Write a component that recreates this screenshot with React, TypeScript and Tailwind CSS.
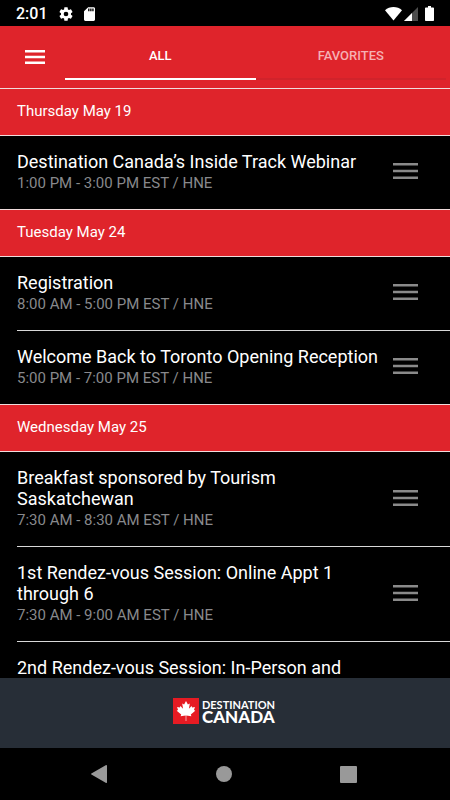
import React, { useState } from 'react';

type Session = { title: string; time: string };
type Day = { name: string; sessions: Session[] };

const days: Day[] = [
  {
    name: 'Thursday May 19',
    sessions: [
      { title: 'Destination Canada’s Inside Track Webinar', time: '1:00 PM - 3:00 PM EST / HNE' },
    ],
  },
  {
    name: 'Tuesday May 24',
    sessions: [
      { title: 'Registration', time: '8:00 AM - 5:00 PM EST / HNE' },
      { title: 'Welcome Back to Toronto Opening Reception', time: '5:00 PM - 7:00 PM EST / HNE' },
    ],
  },
  {
    name: 'Wednesday May 25',
    sessions: [
      { title: 'Breakfast sponsored by Tourism Saskatchewan', time: '7:30 AM - 8:30 AM EST / HNE' },
      { title: '1st Rendez-vous Session: Online Appt 1 through 6', time: '7:30 AM - 9:00 AM EST / HNE' },
      { title: '2nd Rendez-vous Session: In-Person and Online', time: '9:00 AM - 12:00 PM EST / HNE' },
    ],
  },
];

const StatusBar: React.FC = () => (
  <div className="flex h-[26px] shrink-0 items-center bg-black pl-4 pr-4 pt-px text-white">
    <span className="text-base font-medium leading-5">2:01</span>
    <svg viewBox="0 0 24 24" className="ml-[10px] size-4" fill="currentColor">
      <path d="M19.43 12.98c.04-.32.07-.64.07-.98s-.03-.66-.07-.98l2.11-1.65c.19-.15.24-.42.12-.64l-2-3.46c-.12-.22-.39-.3-.61-.22l-2.49 1c-.52-.4-1.08-.73-1.69-.98l-.38-2.65A.49.49 0 0 0 14 2h-4c-.25 0-.46.18-.49.42l-.38 2.65c-.61.25-1.17.59-1.69.98l-2.49-1c-.23-.09-.49 0-.61.22l-2 3.46c-.13.22-.07.49.12.64l2.11 1.65c-.04.32-.07.65-.07.98s.03.66.07.98l-2.11 1.65c-.19.15-.24.42-.12.64l2 3.46c.12.22.39.3.61.22l2.49-1c.52.4 1.08.73 1.69.98l.38 2.65c.03.24.24.42.49.42h4c.25 0 .46-.18.49-.42l.38-2.65c.61-.25 1.17-.59 1.69-.98l2.49 1c.23.09.49 0 .61-.22l2-3.46c.12-.22.07-.49-.12-.64l-2.11-1.65zM12 15.5a3.5 3.5 0 1 1 0-7 3.5 3.5 0 0 1 0 7z" />
    </svg>
    <svg viewBox="4 2 16 20" className="ml-[10px] h-[14px] w-[11px]" fill="currentColor">
      <path d="M18 2h-8L4.02 8 4 20c0 1.100.9 2 2 2h12c1.100 0 2-.9 2-2V4c0-1.100-.9-2-2-2zm-6 6h-2V4h2v4zm3 0h-2V4h2v4zm3 0h-2V4h2v4z" />
    </svg>
    <svg viewBox="0 0 17 14" className="ml-auto h-[14px] w-[17px]" fill="currentColor">
      <path d="M8.500 13.500L0 3.200C2.400 1.200 5.300 0 8.500 0s6.100 1.200 8.500 3.200z" />
    </svg>
    <svg viewBox="0 0 14 14" className="ml-[2px] size-[14px]" fill="currentColor">
      <path d="M0 14L14 0v14z" fillOpacity="0.3" />
      <path d="M0 14L8 6v8z" />
    </svg>
    <svg viewBox="0 0 9 15" className="ml-[7px] h-[15px] w-[9px]" fill="currentColor">
      <path d="M3 0h3v1.500h2.200c.5 0 .8.300.8.800v11.900c0 .5-.3.800-.8.800H.8c-.5 0-.8-.3-.8-.8V2.300c0-.5.3-.8.800-.8H3z" />
    </svg>
  </div>
);

const tabs = ['ALL', 'FAVORITES'];

const Header: React.FC = () => {
  const [active, setActive] = useState('ALL');

  return (
    <header className="flex h-[62px] shrink-0 items-start bg-[#df242b] pr-1 pt-[6px] text-white">
      <button type="button" aria-label="Menu" className="flex h-12 w-[65px] items-center pl-[25px] pt-[2px]">
        <svg viewBox="0 0 20 14" className="h-[14px] w-5" fill="currentColor">
          <path d="M0 0h20v2.500H0zM0 5.750h20v2.500H0zM0 11.500h20v2.500H0z" />
        </svg>
      </button>
      <nav className="flex flex-1">
        {tabs.map((tab) => (
          <button
            key={tab}
            type="button"
            onClick={() => setActive(tab)}
            className={`h-12 flex-1 border-b-2 pt-[2px] text-[13px] font-medium ${
              active === tab ? 'border-white text-white' : 'border-[#d1232b] text-[#f6b1b4]'
            }`}
          >
            {tab}
          </button>
        ))}
      </nav>
    </header>
  );
};

const SessionRow: React.FC<{ session: Session }> = ({ session }) => (
  <li className="ml-[17px] flex items-center border-b border-[#d8d8d8] py-[15px] pr-8 last:border-b-0">
    <div className="min-w-0 flex-1">
      <h3 className="text-lg leading-[21px] text-white">{session.title}</h3>
      <p className="text-[15px] leading-[22px] text-[#88898c]">{session.time}</p>
    </div>
    <button type="button" aria-label={`Move ${session.title}`} className="ml-2 shrink-0 pb-[3px] text-[#8a8a8a]">
      <svg viewBox="0 0 25 16" className="h-4 w-[25px]" fill="currentColor">
        <path d="M0 0h25v2.500H0zM0 6.750h25v2.500H0zM0 13.500h25v2.500H0z" />
      </svg>
    </button>
  </li>
);

const SponsorBanner: React.FC = () => (
  <footer className="flex h-[70px] shrink-0 items-center justify-center bg-[#272e37] pb-1 text-white">
    <a href="#destination-canada" className="flex items-center gap-[3px] pr-[2px]">
      <svg viewBox="0 0 26 26" className="size-[26px]">
        <path d="M0 0h26v26H0z" fill="#e61b23" />
        <path
          d="M13 3l-1.900 3.500-1.900-.9.900 5.100-2.700-2.600-.6 1.500-2.700-.5.900 2.900-1.300.7 4.500 3.800-.6 1.700 5.100-.6v5.400h.6v-5.400l5.100.6-.6-1.700 4.500-3.800-1.300-.7.900-2.900-2.700.5-.6-1.500-2.700 2.600.9-5.100-1.900.9z"
          fill="#fff"
        />
      </svg>
      <span className="font-[Lato,sans-serif]">
        <span className="block text-[11px] font-bold leading-[11px]">DESTINATION</span>
        <span className="block text-[17px] font-black leading-[14px]">CANADA</span>
      </span>
    </a>
  </footer>
);

const SystemNav: React.FC = () => (
  <div className="flex h-[52px] shrink-0 items-center justify-center bg-black pr-[2px] text-[#999999]">
    <div className="flex w-[266px] items-center justify-between">
      <button type="button" aria-label="Back">
        <svg viewBox="0 0 16 18" className="h-[18px] w-4" fill="currentColor">
          <path d="M15.200 0c.5 0 .8.300.8.700v16.600c0 .5-.4.900-.9.600L.4 9.500a.6.600 0 0 1 0-1L14.700.2z" />
        </svg>
      </button>
      <button type="button" aria-label="Home" className="size-4 rounded-full bg-[#999999]" />
      <button type="button" aria-label="Recent apps" className="size-[17px] rounded-[1px] bg-[#999999]" />
    </div>
  </div>
);

const App: React.FC = () => {
  return (
    <div className="flex h-screen flex-col overflow-hidden bg-black font-[Roboto,sans-serif]">
      <StatusBar />
      <Header />
      <main className="min-h-0 flex-1 overflow-y-auto [scrollbar-width:none]">
        {days.map((day) => (
          <section key={day.name}>
            <h2 className="border-y border-[#f0dcdc] bg-[#df242b] px-[17px] pb-[13px] pt-[11px] text-[15px] leading-[22px] text-white">
              {day.name}
            </h2>
            <ul>
              {day.sessions.map((session) => (
                <SessionRow key={session.title} session={session} />
              ))}
            </ul>
          </section>
        ))}
      </main>
      <SponsorBanner />
      <SystemNav />
    </div>
  );
};

export default App;
